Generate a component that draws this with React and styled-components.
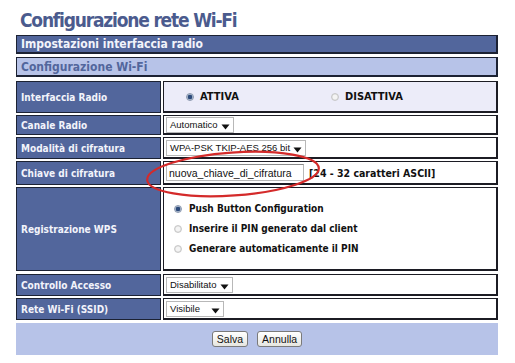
import React from "react";
import styled, { createGlobalStyle } from "styled-components";

const GlobalStyle = createGlobalStyle`
  body {
    margin: 0;
    background: #fff;
    font-family: "DejaVu Sans Condensed", "DejaVu Sans", sans-serif;
  }
`;

const Page = styled.div`
  position: relative;
  width: 515px;
  height: 363px;
  padding: 8px 0 0 16px;
  box-sizing: border-box;
`;

const Title = styled.h1`
  margin: 0 0 3px 4px;
  font-size: 19px;
  line-height: 24px;
  letter-spacing: -1.2px;
  font-weight: bold;
  color: #4b5b8e;
`;

const Form = styled.div`
  width: 482px;
  display: flex;
  flex-direction: column;
  gap: 2px;
`;

const Band = styled.div`
  height: ${(p) => p.h}px;
  box-sizing: border-box;
  display: flex;
  align-items: center;
  padding-left: 4px;
  margin-bottom: ${(p) => p.mb || 0}px;
  background: ${(p) => (p.light ? "#b7c3e8" : "#52669c")};
  color: ${(p) => (p.light ? "#52669c" : "#f2f4fb")};
  border: 1px solid #1c2233;
  border-width: 1px 2px 2px 1px;
  font-size: 12px;
  font-weight: bold;
`;

const Row = styled.div`
  display: grid;
  grid-template-columns: 145px 1fr;
  gap: 2px;
  height: ${(p) => p.h}px;
  margin-top: ${(p) => p.mt || 0}px;
`;

const Label = styled.div`
  box-sizing: border-box;
  background: #52669c;
  border: 1px solid #1c2233;
  display: flex;
  align-items: center;
  padding-left: 4px;
  color: #f2f4fb;
  font-size: 10px;
  font-weight: bold;
`;

const Value = styled.div`
  box-sizing: border-box;
  background: ${(p) => (p.tint ? "#ececf9" : "#fff")};
  border: 1px solid #1c1c24;
  border-width: 1px 2px 2px 1px;
  display: flex;
  flex-direction: ${(p) => (p.column ? "column" : "row")};
  justify-content: ${(p) => (p.column ? "center" : "flex-start")};
  align-items: ${(p) => (p.column ? "flex-start" : "center")};
  gap: ${(p) => (p.column ? "9px" : "0")};
  padding-left: ${(p) => p.pl || 2}px;
`;

const RadioPair = styled.div`
  display: grid;
  grid-template-columns: 145px 1fr;
  width: 100%;
  padding-left: 20px;
`;

const RadioItem = styled.label`
  display: flex;
  align-items: center;
  gap: ${(p) => (p.wide ? 6 : 7)}px;
  font-size: ${(p) => (p.wide ? 11 : 10)}px;
  font-weight: bold;
  color: #111;
`;

const Dot = styled.span`
  width: 8px;
  height: 8px;
  border-radius: 50%;
  box-sizing: border-box;
  background: ${(p) =>
    p.on
      ? "radial-gradient(circle, #2c4a7a 0 2px, #9fb0c8 2.5px, #e4e8ee 4px)"
      : "radial-gradient(circle, #f4f4f4 0 2px, #dcdcdc 3px)"};
  border: 1px solid ${(p) => (p.on ? "#8a98ae" : "#c8c8c8")};
`;

const Select = styled.div`
  width: ${(p) => p.w}px;
  height: 16px;
  box-sizing: border-box;
  border: 1px solid #b8b8b8;
  background: #fff;
  display: flex;
  align-items: center;
  justify-content: space-between;
  padding: 0 3px;
  white-space: nowrap;
  font-family: "Liberation Sans", Arial, sans-serif;
  font-size: 9.5px;
  color: #111;
`;

const Arrow = styled.svg`
  flex: none;
  width: 9px;
  height: 6px;
  margin-top: 5px;
`;

const TextBox = styled.div`
  width: 138px;
  height: 17px;
  box-sizing: border-box;
  border: 1px solid #b8b8b8;
  border-top-color: #8a8a8a;
  display: flex;
  align-items: center;
  padding-left: 2px;
  white-space: nowrap;
  font-family: "Liberation Sans", Arial, sans-serif;
  font-size: 10.5px;
  color: #111;
`;

const Hint = styled.span`
  margin-left: 5px;
  font-size: 10.5px;
  font-weight: bold;
  color: #111;
`;

const ButtonBar = styled.div`
  height: 32px;
  margin-top: 1px;
  background: #b7c3e8;
  display: flex;
  justify-content: center;
  align-items: center;
  gap: 9px;
`;

const Button = styled.button`
  height: 16px;
  padding: 0 4px;
  border: 1px solid #7a7a7a;
  border-radius: 3px;
  background: linear-gradient(#ffffff, #e6e6e0);
  font-family: "Liberation Sans", Arial, sans-serif;
  font-size: 10.5px;
  color: #111;
  line-height: 12px;
`;

const Circle = styled.svg`
  position: absolute;
  left: 0;
  top: 0;
  pointer-events: none;
`;

const DropArrow = () => (
  <Arrow viewBox="0 0 9 6">
    <path d="M0.5 0.5 L8.5 0.5 L4.5 5.5 Z" fill="#111" />
  </Arrow>
);

const App = () => (
  <Page>
    <GlobalStyle />
    <Title>Configurazione rete Wi-Fi</Title>
    <Form>
      <Band h={19} mb={1}>Impostazioni interfaccia radio</Band>
      <Band h={20} mb={2} light>Configurazione Wi-Fi</Band>
      <Row h={32}>
        <Label>Interfaccia Radio</Label>
        <Value tint>
          <RadioPair>
            <RadioItem wide>
              <Dot on />
              ATTIVA
            </RadioItem>
            <RadioItem wide>
              <Dot />
              DISATTIVA
            </RadioItem>
          </RadioPair>
        </Value>
      </Row>
      <Row h={20}>
        <Label>Canale Radio</Label>
        <Value>
          <Select w={68}>
            Automatico <DropArrow />
          </Select>
        </Value>
      </Row>
      <Row h={22}>
        <Label>Modalità di cifratura</Label>
        <Value>
          <Select w={140}>
            WPA-PSK TKIP-AES 256 bit <DropArrow />
          </Select>
        </Value>
      </Row>
      <Row h={24}>
        <Label>Chiave di cifratura</Label>
        <Value>
          <TextBox>nuova_chiave_di_cifratura</TextBox>
          <Hint>[24 - 32 caratteri ASCII]</Hint>
        </Value>
      </Row>
      <Row h={84}>
        <Label>Registrazione WPS</Label>
        <Value column pl={10}>
          <RadioItem>
            <Dot on />
            Push Button Configuration
          </RadioItem>
          <RadioItem>
            <Dot />
            Inserire il PIN generato dal client
          </RadioItem>
          <RadioItem>
            <Dot />
            Generare automaticamente il PIN
          </RadioItem>
        </Value>
      </Row>
      <Row h={22} mt={1}>
        <Label>Controllo Accesso</Label>
        <Value>
          <Select w={67}>
            Disabilitato <DropArrow />
          </Select>
        </Value>
      </Row>
      <Row h={22}>
        <Label>Rete Wi-Fi (SSID)</Label>
        <Value>
          <Select w={58}>
            Visibile <DropArrow />
          </Select>
        </Value>
      </Row>
      <ButtonBar>
        <Button>Salva</Button>
        <Button>Annulla</Button>
      </ButtonBar>
    </Form>
    <Circle width="515" height="363" viewBox="0 0 515 363">
      <ellipse
        cx="233"
        cy="174"
        rx="86"
        ry="21.5"
        transform="rotate(-4 233 174)"
        fill="none"
        stroke="#d42a2a"
        strokeWidth="2.2"
      />
    </Circle>
  </Page>
);

export default App;
